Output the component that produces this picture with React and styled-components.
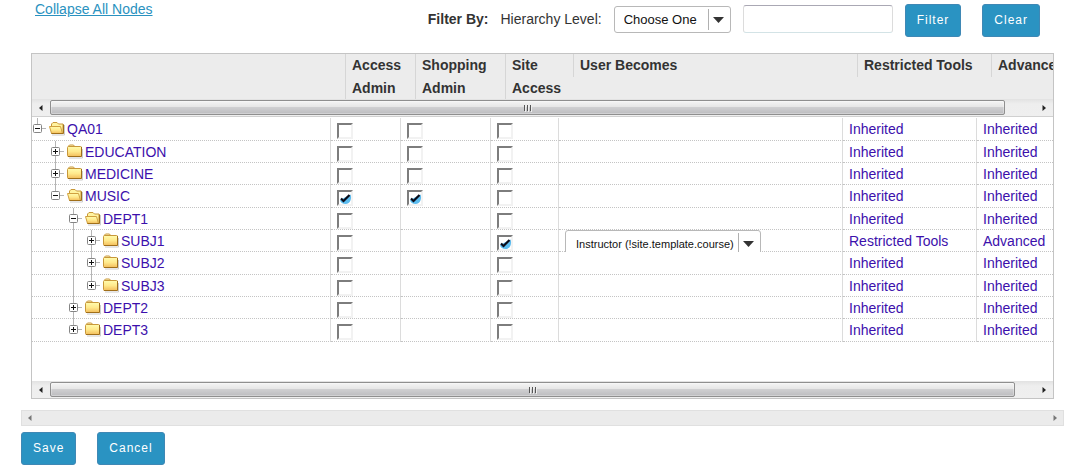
import React, { useState } from "react";
import styled, { createGlobalStyle, css } from "styled-components";

const GlobalStyle = createGlobalStyle`
  * { box-sizing: border-box; }
  body {
    margin: 0;
    background: #fff;
    color: #333;
    font: 14px/21px "Liberation Sans", Arial, sans-serif;
  }
  button, input, select { font-family: inherit; }
`;

const Page = styled.main`
  padding: 0 16px 0 21px;
`;

const TopBar = styled.header`
  display: flex;
  justify-content: space-between;
  align-items: flex-start;
  height: 53px;
  padding: 0 24px 0 14px;
`;

const CollapseLink = styled.a`
  color: #2a92c0;
  line-height: 18px;
`;

const Filters = styled.form`
  display: flex;
  align-items: flex-start;
  gap: 12px;
  padding-top: 4px;
`;

const FilterTitle = styled.strong`
  line-height: 31px;
`;

const FilterLabel = styled.label`
  line-height: 31px;
`;

const SelectFrame = styled.span`
  display: grid;
  width: ${(p) => p.$width}px;
  height: 27px;
  margin-top: ${(p) => (p.$spaced ? 2 : 0)}px;
  border: 1px solid #b8b8b8;
  border-radius: 3px;
  background: #fff;
  > * { grid-area: 1 / 1; }
`;

const Select = styled.select`
  appearance: none;
  width: 100%;
  height: 25px;
  padding: 0 24px 0 ${(p) => (p.$small ? 10 : 9)}px;
  border: 0;
  background: transparent;
  color: #111;
  font-size: ${(p) => (p.$small ? 11 : 13)}px;
`;

const SelectArrow = styled.svg`
  justify-self: end;
  align-self: center;
  pointer-events: none;
`;

const TextInput = styled.input`
  width: 150px;
  height: 28px;
  margin-top: 1px;
  padding: 0 6px;
  border: 1px solid #dcdcdc;
  border-top-color: #aaa8b4;
  border-bottom-color: #d3e3e6;
  border-radius: 3px;
`;

const Button = styled.button`
  height: 33px;
  padding: 0 11px 2px;
  border: 1px solid #3f88b5;
  border-radius: 3px;
  background: #2a93c2;
  color: #fff;
  font-size: 12px;
  letter-spacing: 1px;
`;

const FilterButtons = styled.div`
  display: flex;
  gap: 21px;
`;

const Panel = styled.section`
  margin: 0 10px;
  border: 1px solid #c4c4c4;
`;

const HeaderClip = styled.div`
  height: 45px;
  overflow: hidden;
  background: #ececec;
`;

const BodyClip = styled.div`
  padding: 1px 0 39px;
  overflow: hidden;
  border-top: 1px solid #d0d0d0;
`;

const Grid = styled.table`
  width: ${(p) => p.$width}px;
  min-width: 100%;
  table-layout: fixed;
  border-collapse: separate;
  border-spacing: 0;
`;

const HeadCell = styled.th`
  padding: 0;
  text-align: left;
  vertical-align: top;
  line-height: 23px;
`;

const HeadLabel = styled.div`
  padding-left: 6px;
  border-left: 1px solid #d6d6d6;
`;

const Row = styled.tr`
  height: 22px;
  &:nth-child(3n + 1) { height: 23px; }
`;

const Cell = styled.td`
  padding: 0 6px;
  border-right: 1px solid #dcdcdc;
  border-bottom: 1px dotted #c4c4c4;
  vertical-align: top;
  white-space: nowrap;
`;

const TreeCell = styled(Cell)`
  padding: 0;
`;

const cellLink = css`
  height: 21px;
  color: #3c10ac;
  line-height: 23px;
  text-decoration: none;
`;

const CellLink = styled.a`
  ${cellLink}
  display: block;
`;

const Node = styled.div`
  display: flex;
  height: 21px;
`;

const Guide = styled.svg`
  display: block;
  flex: none;
  overflow: visible;
`;

const Toggle = styled.button`
  display: block;
  width: 17px;
  height: 21px;
  padding: 0;
  border: 0;
  background: none;
`;

const NodeLink = styled.a`
  ${cellLink}
  display: flex;
  gap: 2px;
`;

const CheckFrame = styled.span`
  display: grid;
  width: 16px;
  height: 16px;
  margin-top: 5px;
  > * { grid-area: 1 / 1; }
`;

const CheckBox = styled.input`
  appearance: none;
  width: 16px;
  height: 16px;
  margin: 0;
  border: 2px solid;
  border-color: #7d7d7d #f2f2f2 #f2f2f2 #7d7d7d;
  background: #fff;
`;

const CheckMark = styled.svg`
  pointer-events: none;
`;

const RoleSlot = styled.div`
  height: 22px;
  margin-bottom: -1px;
  overflow: hidden;
  background: #fff;
  width: 196px;
`;

const Bar = styled.div`
  display: flex;
  justify-content: ${(p) => (p.$disabled ? "space-between" : "flex-start")};
  height: ${(p) => (p.$disabled ? 16 : 17)}px;
  margin-top: ${(p) => (p.$disabled ? 11 : 0)}px;
  border: ${(p) => (p.$disabled ? "1px solid #e0e0e0" : "0")};
  background: ${(p) => (p.$disabled ? "#ebebeb" : "linear-gradient(#e2e2e2, #eee 5px, #efefef)")};
`;

const BarArrow = styled.button`
  display: flex;
  align-items: center;
  justify-content: center;
  flex: none;
  width: ${(p) => (p.$narrow ? 16 : 18)}px;
  padding: 0;
  border: 0;
  background: none;
`;

const BarTrack = styled.div`
  flex: 1;
  padding: 1px 0;
`;

const BarThumb = styled.div`
  display: flex;
  align-items: center;
  justify-content: center;
  width: ${(p) => p.$size}%;
  height: 15px;
  border: 1px solid #8f8f8f;
  border-radius: 2px;
  background: linear-gradient(#f5f5f5, #e6e6e6 45%, #cfcfd1 50%, #bcbcbf);
  box-shadow: inset 0 0 0 1px rgba(255, 255, 255, 0.3);
`;

const Actions = styled.footer`
  display: flex;
  gap: 21px;
  padding-top: 6px;
`;

const Arrow = ({ dir, pale }) => (
  <svg width="6" height="8" viewBox="0 0 6 8" aria-hidden="true">
    <path d={dir === "left" ? "M4.500 1v6L1 4z" : "M1.500 1v6L5 4z"} fill={pale ? "#777" : "#222"} />
  </svg>
);

const ScrollBar = ({ size, disabled }) => (
  <Bar $disabled={disabled}>
    <BarArrow type="button" aria-label="Scroll left" disabled={disabled} $narrow={disabled}>
      <Arrow dir="left" pale={disabled} />
    </BarArrow>
    {!disabled && (
      <BarTrack>
        <BarThumb $size={size}>
          <svg width="9" height="8" viewBox="0 0 9 8" aria-hidden="true">
            <path d="M1.500 1v6M4.500 1v6M7.500 1v6" stroke="#555" />
            <path d="M2.500 1v7M5.500 1v7M8.500 1v7" stroke="#eee" />
          </svg>
        </BarThumb>
      </BarTrack>
    )}
    <BarArrow type="button" aria-label="Scroll right" disabled={disabled} $narrow={disabled}>
      <Arrow dir="right" pale={disabled} />
    </BarArrow>
  </Bar>
);

const DropDown = ({ id, label, width, small, spaced, options }) => (
  <SelectFrame $width={width} $spaced={spaced}>
    <Select id={id} aria-label={label} $small={small}>
      {options.map((o) => <option key={o}>{o}</option>)}
    </Select>
    <SelectArrow width="22" height="21" viewBox="0 0 22 21" aria-hidden="true">
      <path d="M.5 0v21" stroke="#b0b0b0" />
      <path d="M5 8h11l-5.500 6z" fill="#333" />
    </SelectArrow>
  </SelectFrame>
);

const GuideLine = ({ on }) => (
  <Guide width="18" height="21" viewBox="0 0 18 21" aria-hidden="true">
    {on && <path d="M5.500 0v23" stroke="#b5b5b5" />}
  </Guide>
);

const Expander = ({ open, below }) => (
  <Guide width="17" height="21" viewBox="0 0 17 21" aria-hidden="true">
    <path d={below ? "M5.500 0v23" : "M5.500 0v10"} stroke="#b5b5b5" />
    <path d="M10 10.500h4" stroke="#b5b5b5" />
    <rect x="1.500" y="6.500" width="8" height="8" rx="1" fill="#fff" stroke="#858585" />
    <path d={open ? "M3 10.500h5" : "M3 10.500h5M5.500 8v5"} stroke="#111" />
  </Guide>
);

const Folder = ({ open }) => (
  <svg width="16" height="21" viewBox="0 0 16 21" aria-hidden="true">
    <defs>
      <linearGradient id="folderFront" x1="0" y1="0" x2="0" y2="1">
        <stop offset="0" stopColor="#fffcae" />
        <stop offset=".5" stopColor="#ffe98c" />
        <stop offset="1" stopColor="#f3bd5b" />
      </linearGradient>
    </defs>
    {open ? (
      <>
        <path d="M3 17h12.500V7" fill="none" stroke="#ccc" />
        <path d="M2.500 9V6L4 4.500h4L9.500 6h4.500V15.500H3z" fill="#fff3a0" stroke="#c8983a" />
        <path d="M.5 8.500H11.500L13.500 15.500H2.500z" fill="url(#folderFront)" stroke="#d0a040" />
        <path d="M2.500 15.500h12V6.500" fill="none" stroke="#a06f1a" />
      </>
    ) : (
      <>
        <path d="M2 17h13.500V8" fill="none" stroke="#ccc" />
        <path d="M1.500 6V5l1-1h4l1.500 2" fill="#fff3c0" stroke="#c8983a" />
        <rect x=".5" y="5.500" width="14" height="10" rx="1" fill="url(#folderFront)" stroke="#c8983a" />
        <path d="M1 15.500h13.500V6" fill="none" stroke="#a06f1a" />
      </>
    )}
  </svg>
);

const Check = ({ label, initial }) => {
  const [on, setOn] = useState(initial);
  return (
    <CheckFrame>
      <CheckBox type="checkbox" aria-label={label} checked={on} onChange={() => setOn(!on)} />
      {on && (
        <CheckMark width="16" height="16" viewBox="0 0 16 16" aria-hidden="true">
          <path d="M13.500 4.500C15 8 13.500 14 8.500 14 5.500 14 3.500 12.500 3 10z" fill="#5cbcef" />
          <path d="M4 8.500l2.500 2.500 6-6" fill="none" stroke="#0b0b18" strokeWidth="2.200" />
        </CheckMark>
      )}
    </CheckFrame>
  );
};

/* guides: which ancestor levels draw a line through the row.
   checks: access admin, shopping admin, site access (null = no box). */
const rows = [
  { name: "QA01", guides: [], open: true, checks: [false, false, false] },
  { name: "EDUCATION", guides: [false], below: true, checks: [false, false, false] },
  { name: "MEDICINE", guides: [false], below: true, checks: [false, false, false] },
  { name: "MUSIC", guides: [false], open: true, checks: [true, true, false] },
  { name: "DEPT1", guides: [false, false], open: true, below: true, checks: [false, null, false] },
  {
    name: "SUBJ1", guides: [false, false, true], below: true, checks: [false, null, true],
    role: "Instructor (!site.template.course)", tools: "Restricted Tools", more: "Advanced",
  },
  { name: "SUBJ2", guides: [false, false, true], below: true, checks: [false, null, false] },
  { name: "SUBJ3", guides: [false, false, true], checks: [false, null, false] },
  { name: "DEPT2", guides: [false, false], below: true, checks: [false, null, false] },
  { name: "DEPT3", guides: [false, false], checks: [false, null, false] },
];

const checkNames = ["Access Admin", "Shopping Admin", "Site Access"];
const headings = [...checkNames, "User Becomes", "Restricted Tools", "Advanced"];

const Columns = ({ first }) => (
  <colgroup>
    {[first, 70, 90, 68, 284, 134, 134].map((w, i) => <col key={i} width={w} />)}
  </colgroup>
);

export default function App() {
  return (
    <Page>
      <GlobalStyle />
      <TopBar>
        <CollapseLink href="#collapse">Collapse All Nodes</CollapseLink>
        <Filters onSubmit={(e) => e.preventDefault()}>
          <FilterTitle>Filter By:</FilterTitle>
          <FilterLabel htmlFor="level">Hierarchy Level:</FilterLabel>
          <DropDown id="level" width={117} spaced options={["Choose One"]} />
          <TextInput type="text" aria-label="Filter text" />
          <FilterButtons>
            <Button type="submit">Filter</Button>
            <Button type="reset">Clear</Button>
          </FilterButtons>
        </Filters>
      </TopBar>

      <Panel>
        <HeaderClip>
          <Grid $width={1093}>
            <Columns first={313} />
            <thead>
              <tr>
                <HeadCell />
                {headings.map((h) => (
                  <HeadCell key={h} scope="col"><HeadLabel>{h}</HeadLabel></HeadCell>
                ))}
              </tr>
            </thead>
          </Grid>
        </HeaderClip>
        <ScrollBar size={97} />
        <BodyClip>
          <Grid $width={1079}>
            <Columns first={299} />
            <tbody>
              {rows.map((r) => (
                <Row key={r.name}>
                  <TreeCell>
                    <Node>
                      {r.guides.map((g, i) => <GuideLine key={i} on={g} />)}
                      <Toggle type="button" aria-label={`Toggle ${r.name}`}>
                        <Expander open={r.open} below={r.below} />
                      </Toggle>
                      <NodeLink href="#node">
                        <Folder open={r.open} />
                        {r.name}
                      </NodeLink>
                    </Node>
                  </TreeCell>
                  {r.checks.map((c, i) => (
                    <Cell key={i}>
                      {c !== null && <Check label={`${checkNames[i]} ${r.name}`} initial={c} />}
                    </Cell>
                  ))}
                  <Cell>
                    {r.role && (
                      <RoleSlot>
                        <DropDown label={`User becomes ${r.name}`} width={196} small options={[r.role]} />
                      </RoleSlot>
                    )}
                  </Cell>
                  <Cell><CellLink href="#tools">{r.tools || "Inherited"}</CellLink></Cell>
                  <Cell><CellLink href="#advanced">{r.more || "Inherited"}</CellLink></Cell>
                </Row>
              ))}
            </tbody>
          </Grid>
        </BodyClip>
        <ScrollBar size={98} />
      </Panel>

      <ScrollBar disabled />
      <Actions>
        <Button type="button">Save</Button>
        <Button type="button">Cancel</Button>
      </Actions>
    </Page>
  );
}
